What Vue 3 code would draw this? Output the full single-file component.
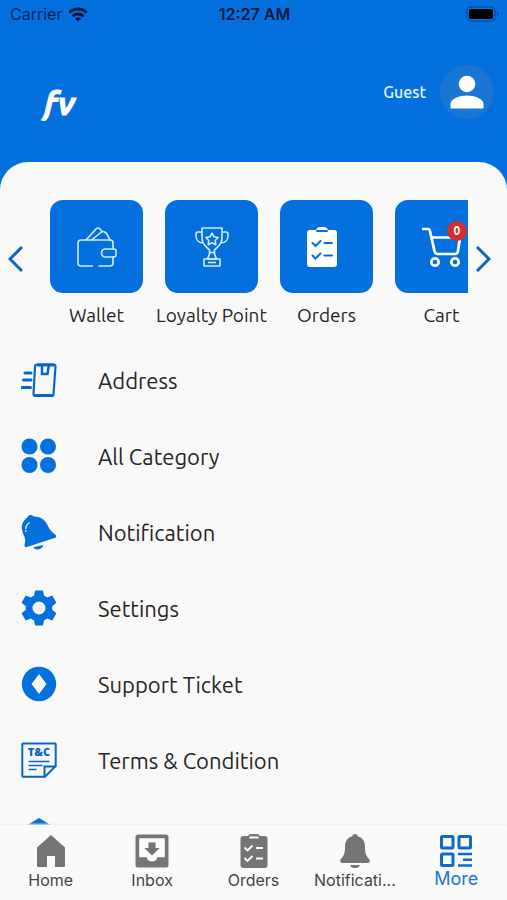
<script setup>
const shortcuts = [
  { label: 'Wallet', icon: 'wallet' },
  { label: 'Loyalty Point', icon: 'trophy' },
  { label: 'Orders', icon: 'orders' },
  { label: 'Cart', icon: 'cart', badge: 0 }
]

const menu = [
  { label: 'Address', icon: 'address' },
  { label: 'All Category', icon: 'category' },
  { label: 'Notification', icon: 'bell' },
  { label: 'Settings', icon: 'settings' },
  { label: 'Support Ticket', icon: 'support' },
  { label: 'Terms & Condition', icon: 'terms' },
  { label: '', icon: 'privacy' }
]

const tabs = [
  { label: 'Home', icon: 'home' },
  { label: 'Inbox', icon: 'inbox' },
  { label: 'Orders', icon: 'orders' },
  { label: 'Notificati...', icon: 'bell' },
  { label: 'More', icon: 'more', active: true }
]
</script>

<template>
  <div class="screen">
    <header class="header">
      <div class="status">
        <div class="carrier">
          <span>Carrier</span>
          <svg width="20" height="15" viewBox="0 0 20 15" fill="none" stroke="currentColor" stroke-width="3">
            <path d="M1.2 5.6a12.6 12.6 0 0 1 17.6 0" />
            <path d="M4.6 9.2a7.7 7.7 0 0 1 10.8 0" />
            <path d="M10 14.6 6.9 11.5a4.4 4.4 0 0 1 6.2 0z" fill="currentColor" stroke="none" />
          </svg>
        </div>
        <span class="time">12:27 AM</span>
        <div class="battery">
          <svg width="33" height="16" viewBox="0 0 33 16">
            <rect x="1" y="1" width="28" height="14" rx="4" fill="none" stroke="#04439a" />
            <rect x="3" y="3" width="24" height="10" rx="2" fill="#000" />
            <path d="M31 6v4q1.500-.6 1.500-2T31 6z" fill="#04439a" />
          </svg>
        </div>
      </div>
      <div class="brand-row">
        <span class="logo">fv</span>
        <a class="profile" href="#">
          <span>Guest</span>
          <span class="avatar">
            <svg width="34" height="34" viewBox="0 0 34 34" fill="#fff">
              <circle cx="17" cy="9" r="8.300" />
              <path d="M.5 33.500V29c0-5.600 9-8.600 16.500-8.600s16.500 3 16.500 8.600v4.500z" />
            </svg>
          </span>
        </a>
      </div>
    </header>

    <main class="sheet">
      <section class="shortcuts">
        <button class="arrow" type="button" aria-label="Previous">
          <svg width="15" height="26" viewBox="0 0 15 26"><path d="M14 1 2 13l12 12" /></svg>
        </button>
        <div class="track">
          <a v-for="item in shortcuts" :key="item.label" class="shortcut" href="#">
            <span class="tile">
              <svg v-if="item.icon === 'wallet'" width="40" height="40" viewBox="0 0 40 40" fill="none" stroke="#d5ecff" stroke-width="1.600" stroke-linejoin="round" stroke-linecap="round">
                <path d="M15.500 39H4q-3 0-3-3V16q0-3 3-3h29q3 0 3 3v6M22 39h11q3 0 3-3v-6" />
                <path d="M28.500 22H37q2 0 2 2v4q0 2-2 2h-8.500a4 4 0 0 1 0-8z" />
                <path d="M9 13 19.500 1.500q1.500-1 3 0L25 4.500M14.500 13 24.500 5q1.500-1 3 0l2 1.500 3.500 6.500" />
              </svg>
              <svg v-else-if="item.icon === 'trophy'" width="34" height="40" viewBox="0 0 34 40" fill="none" stroke="#d5ecff" stroke-width="1.600" stroke-linejoin="round">
                <path d="M7 1h20v10c0 7-5 9-7.500 12v4l2 5h-9l2-5v-4C12 20 7 18 7 11z" />
                <path d="M7 5H3Q1 5 1 7v2c0 5 4 7 7.500 7M27 5h4q2 0 2 2v2c0 5-4 7-7.500 7" />
                <path d="m17 6 2 3.800 4.200.7-3 3 .6 4.200-3.800-2-3.800 2 .6-4.200-3-3 4.200-.7z" />
                <path d="M9 32h16v7H9zM13 35.500h8M14.500 25.500h5" />
              </svg>
              <svg v-else-if="item.icon === 'orders'" class="orders-icon" width="30" height="40" viewBox="0 0 30 40">
                <path d="M3 3h6q1-3 4-3h4q3 0 4 3h6q3 0 3 3v31q0 3-3 3H3q-3 0-3-3V6q0-3 3-3z" fill="#fff" />
                <path d="M10 4h10M5.500 16l3 3 5-5M17.500 16h7.500M5.500 28.500l3 3 5-5M17.500 28.500h7.500" fill="none" stroke="#0370de" stroke-width="2" stroke-linecap="round" />
              </svg>
              <svg v-else width="40" height="40" viewBox="0 0 40 40" fill="none" stroke="#fff" stroke-width="2.700" stroke-linejoin="round">
                <path d="M0 2h6.500q1 0 1.300 1.500L12.500 24q.5 3 3.500 3h17q2.500 0 3-3l2-13.500H9.500" />
                <circle cx="13" cy="35" r="3.700" />
                <circle cx="33" cy="35" r="3.700" />
              </svg>
              <span v-if="item.badge !== undefined" class="badge">{{ item.badge }}</span>
            </span>
            <span class="shortcut-label">{{ item.label }}</span>
          </a>
        </div>
        <button class="arrow" type="button" aria-label="Next">
          <svg width="15" height="26" viewBox="0 0 15 26"><path d="m1 1 12 12L1 25" /></svg>
        </button>
      </section>

      <nav class="menu">
        <a v-for="item in menu" :key="item.icon" class="menu-item" href="#">
          <svg width="36" height="36" viewBox="0 0 36 36" fill="#0370de">
            <g v-if="item.icon === 'address'" fill="none" stroke="#0866cb" stroke-width="2.200">
              <path d="M16 2.500h16.500q2 0 2 2L32.500 32q0 2-2 2H14.500q-2 0-2-2L14 4.500q0-2 2-2z" />
              <path d="M21 2.500v9.500h5.500L28 2.500" stroke-width="2.500" />
              <path d="M14 33.500h17M16 3h17" stroke-width="3" />
              <path d="M4 11h6M2.500 18H10M1 25.500h8.500" stroke-width="3" stroke-linecap="round" />
            </g>
            <g v-else-if="item.icon === 'category'">
              <circle cx="8.500" cy="8.500" r="8" />
              <circle cx="27" cy="8.500" r="8" />
              <circle cx="8.500" cy="27" r="8" />
              <circle cx="27" cy="27" r="8" />
            </g>
            <g v-else-if="item.icon === 'bell'">
              <path d="M6.500 3.500C6.500.5 11 0 12.500 2.500c6-.4 11.500 3 14 8.500 1.600 3.600 3.500 6.500 7.500 9.500 2 1.500 1.500 3-.5 3.500L6 33c-2 .6-3-.8-2.300-2.800C5.500 23.500 2 21 1 16 0 10.500 2.500 6 6.500 3.500z" />
              <path d="M12.500 33.300 22 31c.2 2-1.300 3.500-4 4.200-2.500.6-4.900 0-5.500-1.900z" />
              <path d="M5 18c-1-4.500.6-8.500 5-10.200" fill="none" stroke="#f9f9f9" stroke-width="1.200" stroke-dasharray="2 1 8 2" />
            </g>
            <path v-else-if="item.icon === 'settings'" fill-rule="evenodd" d="m14 .5-1 5.200q-1.700.7-3.200 1.800L4.700 5.600.6 12.700l4.200 3.500v3.600L.6 23.300l4.100 7.100 5.100-1.900q1.500 1.100 3.200 1.800l1 5.200h8l1-5.200q1.700-.7 3.200-1.800l5.100 1.900 4.100-7.100-4.200-3.500v-3.600l4.200-3.500-4.100-7.100-5.100 1.900Q24.700 6.400 23 5.700l-1-5.200zM18 11.500a6.500 6.500 0 1 1 0 13 6.500 6.500 0 0 1 0-13z" />
            <path v-else-if="item.icon === 'support'" fill-rule="evenodd" d="M18 .8a17.200 17.200 0 1 1 0 34.400A17.200 17.200 0 0 1 18 .8zM18 8l-7.500 10L18 28l7.500-10z" />
            <g v-else-if="item.icon === 'terms'">
              <path d="M2 1.500h32q.7 0 .7.700V24L24 34.700H2q-.7 0-.7-.7V2.200q0-.7.7-.7zM23.500 34.500V24.500h11" fill="none" stroke="#0866cb" stroke-width="2" />
              <path d="M7.500 19.500h21M7.500 23.500h14M7.500 27.500h8" stroke="#0866cb" stroke-width="1.500" />
              <text x="18" y="14" text-anchor="middle" class="terms-mark">T&amp;C</text>
            </g>
            <path v-else d="M18 0 36 11v10q-4 12-18 15Q4 33 0 21V11z" />
          </svg>
          <span>{{ item.label }}</span>
        </a>
      </nav>
    </main>

    <nav class="tabs">
      <a v-for="tab in tabs" :key="tab.label" :class="['tab', { active: tab.active }]" href="#">
        <svg width="34" height="34" viewBox="0 0 34 34" fill="#757575">
          <path v-if="tab.icon === 'home'" d="M17 1 31 13.500V32q0 1-1 1h-9V22h-8v11H4q-1 0-1-1V13.500z" />
          <path v-else-if="tab.icon === 'inbox'" fill-rule="evenodd" d="M3 .5h28q2.500 0 2.500 2.500v28q0 2.500-2.500 2.500H3Q.5 33.500.5 31V3Q.5.5 3 .5zM4.200 4.200v19h7.500a5.400 5.400 0 0 0 10.600 0h7.500v-19zM13.500 8.500h7V14h4.200L17 21.500 9.300 14h4.200z" />
          <g v-else-if="tab.icon === 'orders'">
            <path d="M6.500 2H11q1-2 3-2h6q2 0 3 2h4.500q3 0 3 3v26q0 3-3 3h-21q-3 0-3-3V5q0-3 3-3z" />
            <path d="M12.500 3.500h9M7.500 13.500l3 3 5-5M19 14h7M7.500 24l3 3 5-5M19 24.500h7" fill="none" stroke="#fff" stroke-width="1.800" />
          </g>
          <path v-else-if="tab.icon === 'bell'" d="M14.200 2.300Q14.500 0 17 0t2.800 2.300C25 3.800 27 8 27 13c0 6 1 9 4.500 12.500Q32.500 29 30 29H4q-2.500 0-1.500-3.500C6 22 7 19 7 13c0-5 2-9.200 7.200-10.700zM12 31h10q-1 3.200-5 3.200T12 31z" />
          <g v-else fill="none" stroke="#1169c9" stroke-width="3" stroke-linejoin="round">
            <rect x="2.500" y="2.500" width="11.500" height="11.500" rx="1" />
            <rect x="20" y="2.500" width="11.500" height="11.500" rx="1" />
            <rect x="2.500" y="20" width="11.500" height="11.500" rx="1" />
            <path d="M19 20h14M24 25.700h9M19 31.500h14" stroke-width="2.500" />
          </g>
        </svg>
        <span>{{ tab.label }}</span>
      </a>
    </nav>
  </div>
</template>

<style>
body {
  margin: 0;
}
</style>

<style scoped>
.screen {
  display: flex;
  flex-direction: column;
  height: 100vh;
  background: #0370de;
  color: #262626;
  font-family: Ubuntu, 'Noto Sans', sans-serif;
  overflow: hidden;
}

a {
  color: inherit;
  text-decoration: none;
}

svg {
  display: block;
  flex-shrink: 0;
}

.status {
  display: grid;
  grid-template-columns: 1fr auto 1fr;
  align-items: center;
  height: 28px;
  padding: 0 8px 0 10px;
  color: #06245a;
  font: 16px Inter, sans-serif;
}

.carrier {
  display: flex;
  align-items: center;
  gap: 6px;
}

.carrier svg {
  color: #03173c;
}

.time {
  color: #03173c;
  font-weight: 600;
}

.battery {
  display: flex;
  justify-content: flex-end;
}

.brand-row {
  display: flex;
  align-items: center;
  justify-content: space-between;
  height: 128px;
  padding: 0 13px 6px 44px;
}

.logo {
  padding-top: 22px;
  color: #fff;
  font: italic 700 32px/40px Ubuntu, 'Open Sans', sans-serif;
  -webkit-text-stroke: 1px #fff;
}

.profile {
  display: flex;
  align-items: center;
  gap: 14px;
  color: #e6f4ff;
  font-size: 16px;
  font-weight: 500;
}

.avatar {
  display: grid;
  place-items: center;
  width: 54px;
  height: 54px;
  border-radius: 50%;
  background: #1976d2;
}

.sheet {
  display: flex;
  flex: 1;
  flex-direction: column;
  min-height: 0;
  padding-top: 38px;
  border-radius: 28px 28px 0 0;
  background: #f9f9f9;
  overflow: hidden;
}

.shortcuts {
  display: flex;
  flex-shrink: 0;
  height: 142px;
}

.arrow {
  display: flex;
  flex: none;
  align-items: center;
  justify-content: center;
  width: 39px;
  height: 118px;
  padding: 0 8px 0 0;
  border: 0;
  background: none;
}

.arrow path {
  fill: none;
  stroke: #0866cb;
  stroke-width: 3;
}

.track {
  display: flex;
  flex: 1;
  min-width: 0;
  overflow: hidden;
}

.shortcut {
  display: flex;
  flex: none;
  flex-direction: column;
  align-items: center;
  gap: 9px;
  width: 115px;
}

.tile {
  position: relative;
  display: grid;
  place-items: center;
  width: 93px;
  height: 93px;
  border-radius: 13px;
  background: #0370de;
}

.orders-icon {
  margin-right: 10px;
}

.badge {
  position: absolute;
  top: 21px;
  right: 21px;
  width: 20px;
  border-radius: 50%;
  background: #d32f2f;
  color: #fff;
  font-size: 12px;
  font-weight: 700;
  line-height: 20px;
  text-align: center;
}

.shortcut-label {
  font-size: 19px;
  line-height: 26px;
  white-space: nowrap;
}

.menu-item {
  display: flex;
  align-items: center;
  gap: 41px;
  height: 76px;
  padding-left: 21px;
  font-size: 22px;
}

.terms-mark {
  fill: #0866cb;
  font: 800 11px 'Open Sans', sans-serif;
}

.tabs {
  display: flex;
  flex-shrink: 0;
  height: 75px;
  background: #fafafa;
  box-shadow: 0 -1px 2px #eee;
  z-index: 1;
}

.tab {
  display: flex;
  flex: 1;
  flex-direction: column;
  align-items: center;
  gap: 1px;
  min-width: 0;
  padding-top: 9px;
  color: #444;
  font: 16px/22px Inter, sans-serif;
  white-space: nowrap;
}

.tab.active {
  color: #1976d2;
  font-size: 18px;
  line-height: 20px;
}
</style>
